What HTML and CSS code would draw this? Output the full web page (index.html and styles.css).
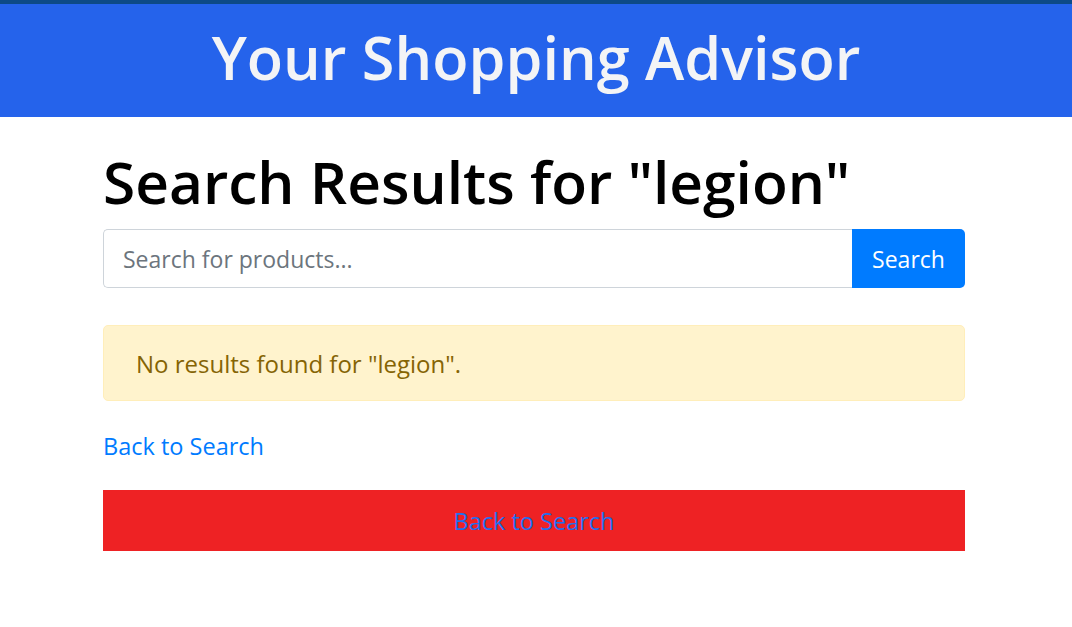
FILE: index.html
```html
<!DOCTYPE html>
<html lang="en">
<head>
<meta charset="utf-8">
<title>Your Shopping Advisor</title>
<link rel="stylesheet" href="styles.css">
</head>
<body>
<div class="topbar"></div>
<header class="header">
  <h1 class="brand">Your Shopping Advisor</h1>
</header>
<main class="container">
  <h2 class="title">Search Results for "legion"</h2>
  <form class="search">
    <input class="search-input" type="text" placeholder="Search for products...">
    <button class="search-btn" type="button">Search</button>
  </form>
  <div class="alert">No results found for "legion".</div>
  <div class="back-row"><a class="back-link" href="#">Back to Search</a></div>
  <div class="redbar"><a class="redbar-link" href="#">Back to Search</a></div>
</main>
</body>
</html>
```
FILE: styles.css
```css
* { box-sizing: border-box; }
body {
  margin: 0;
  font-family: "Open Sans", "Noto Sans", sans-serif;
  background: #fff;
  color: #000;
}
.topbar { height: 4px; background: #0d4a87; }
.header {
  background: #2563eb;
  height: 113px;
  display: flex;
  align-items: center;
  justify-content: center;
}
.brand {
  margin: 0;
  color: #f3f4f6;
  font-weight: 600;
  font-size: 59.4px;
  line-height: 1;
  padding-bottom: 6px;
}
.container {
  width: 862px;
  margin-left: 103px;
}
.title {
  margin: 29px 0 0;
  font-weight: 600;
  font-size: 58.6px;
  line-height: 1.2;
}
.search {
  display: flex;
  margin-top: 13px;
  height: 59px;
}
.search-input {
  flex: 1;
  border: 1px solid #ced4da;
  border-right: none;
  border-radius: 5px 0 0 5px;
  padding: 0 19px;
  font-family: inherit;
  font-size: 23px;
  color: #495057;
  outline: none;
}
.search-input::placeholder { color: #6c757d; }
.search-btn {
  width: 113px;
  border: none;
  background: #007bff;
  color: #fff;
  border-radius: 0 5px 5px 0;
  font-family: inherit;
  font-size: 23px;
}
.alert {
  margin-top: 37px;
  height: 76px;
  display: flex;
  align-items: center;
  padding: 0 32px;
  background: #fff3cd;
  border: 1px solid #ffeeba;
  border-radius: 5px;
  color: #856404;
  font-size: 24px;
}
.back-row {
  margin-top: 28px;
  height: 34px;
  display: flex;
  align-items: center;
}
.back-link {
  color: #007bff;
  text-decoration: none;
  font-size: 23.5px;
}
.redbar {
  margin-top: 27px;
  height: 61px;
  background: #ee2224;
  display: flex;
  align-items: center;
  justify-content: center;
}
.redbar-link {
  color: #1e6ff0;
  text-decoration: none;
  font-size: 23.5px;
}
```
